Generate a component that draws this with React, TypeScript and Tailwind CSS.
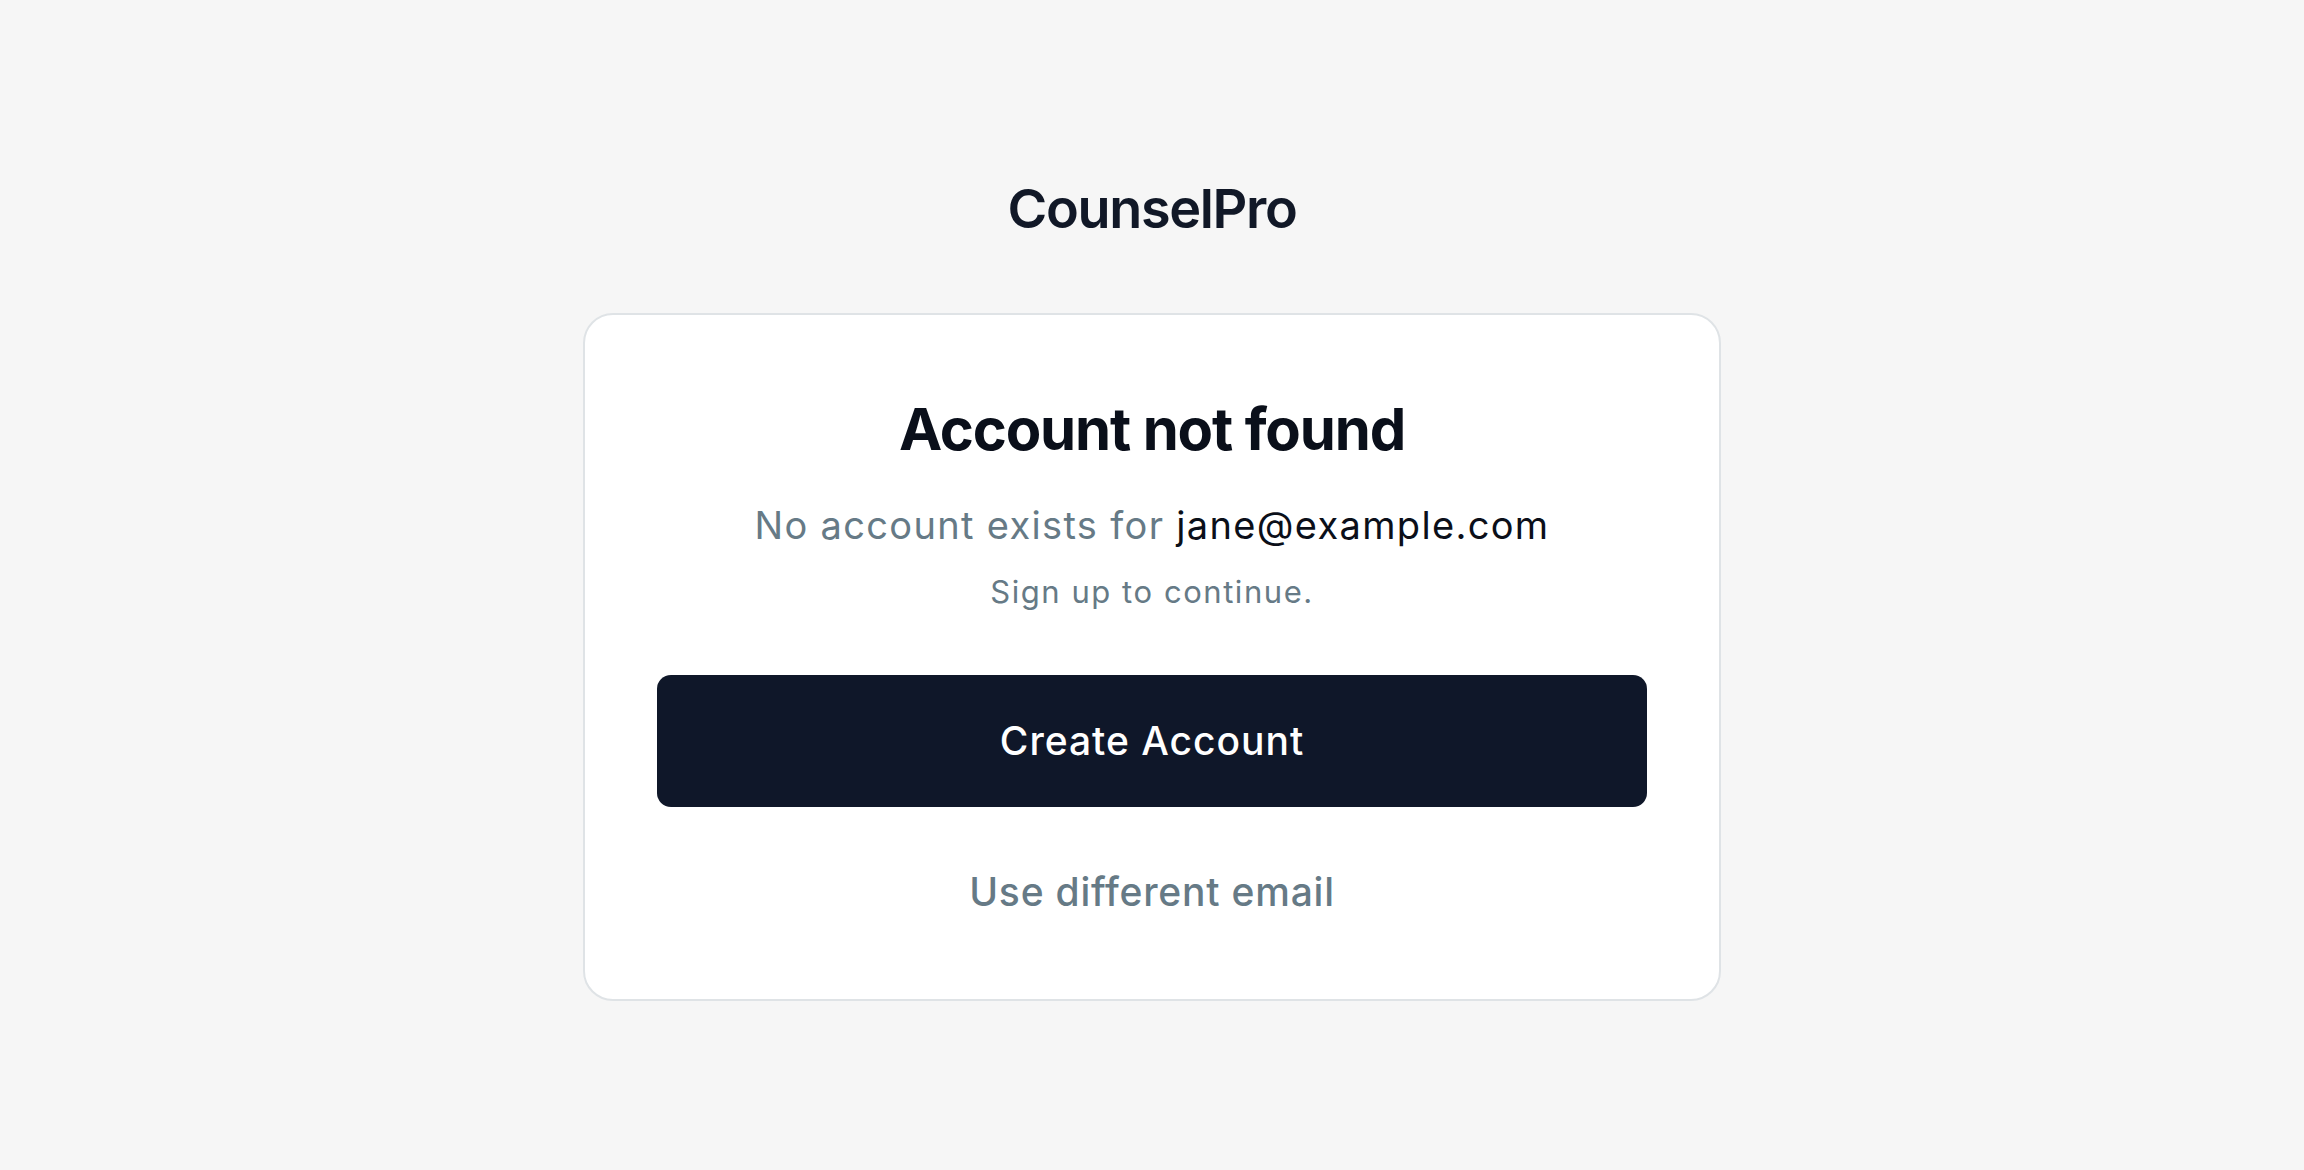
import React from 'react';

const font = { fontFamily: 'Inter, "Liberation Sans", sans-serif' };

export default function App() {
  return (
    <div style={font} className="min-h-screen w-full bg-[#f6f6f6] flex flex-col items-center">
      <h1 className="mt-[182px] text-[54px] leading-none font-semibold tracking-[-0.025em] text-[#111827]">
        CounselPro
      </h1>

      <div className="mt-[77px] w-[1138px] rounded-[30px] border-2 border-[#dfe3e6] bg-white px-[72px] pt-[85px] pb-[88px] flex flex-col items-center">
        <h2 className="text-[58px] leading-none font-bold tracking-[-0.02em] text-[#0a0f1a]">
          Account not found
        </h2>
        <p className="mt-[48px] text-[38px] leading-none tracking-[0.035em] text-[#667a86]">
          No account exists for <span className="text-[#0b0f19]">jane@example.com</span>
        </p>
        <p className="mt-[32px] text-[31px] leading-none tracking-[0.05em] text-[#667a86]">Sign up to continue.</p>

        <button className="mt-[68px] h-[132px] w-full rounded-[14px] bg-[#0f1729] text-[39px] font-medium tracking-[0.025em] text-white">
          Create Account
        </button>

        <button className="mt-[65px] text-[39px] leading-none font-medium tracking-[0.02em] text-[#667a86]">
          Use different email
        </button>
      </div>
    </div>
  );
}
